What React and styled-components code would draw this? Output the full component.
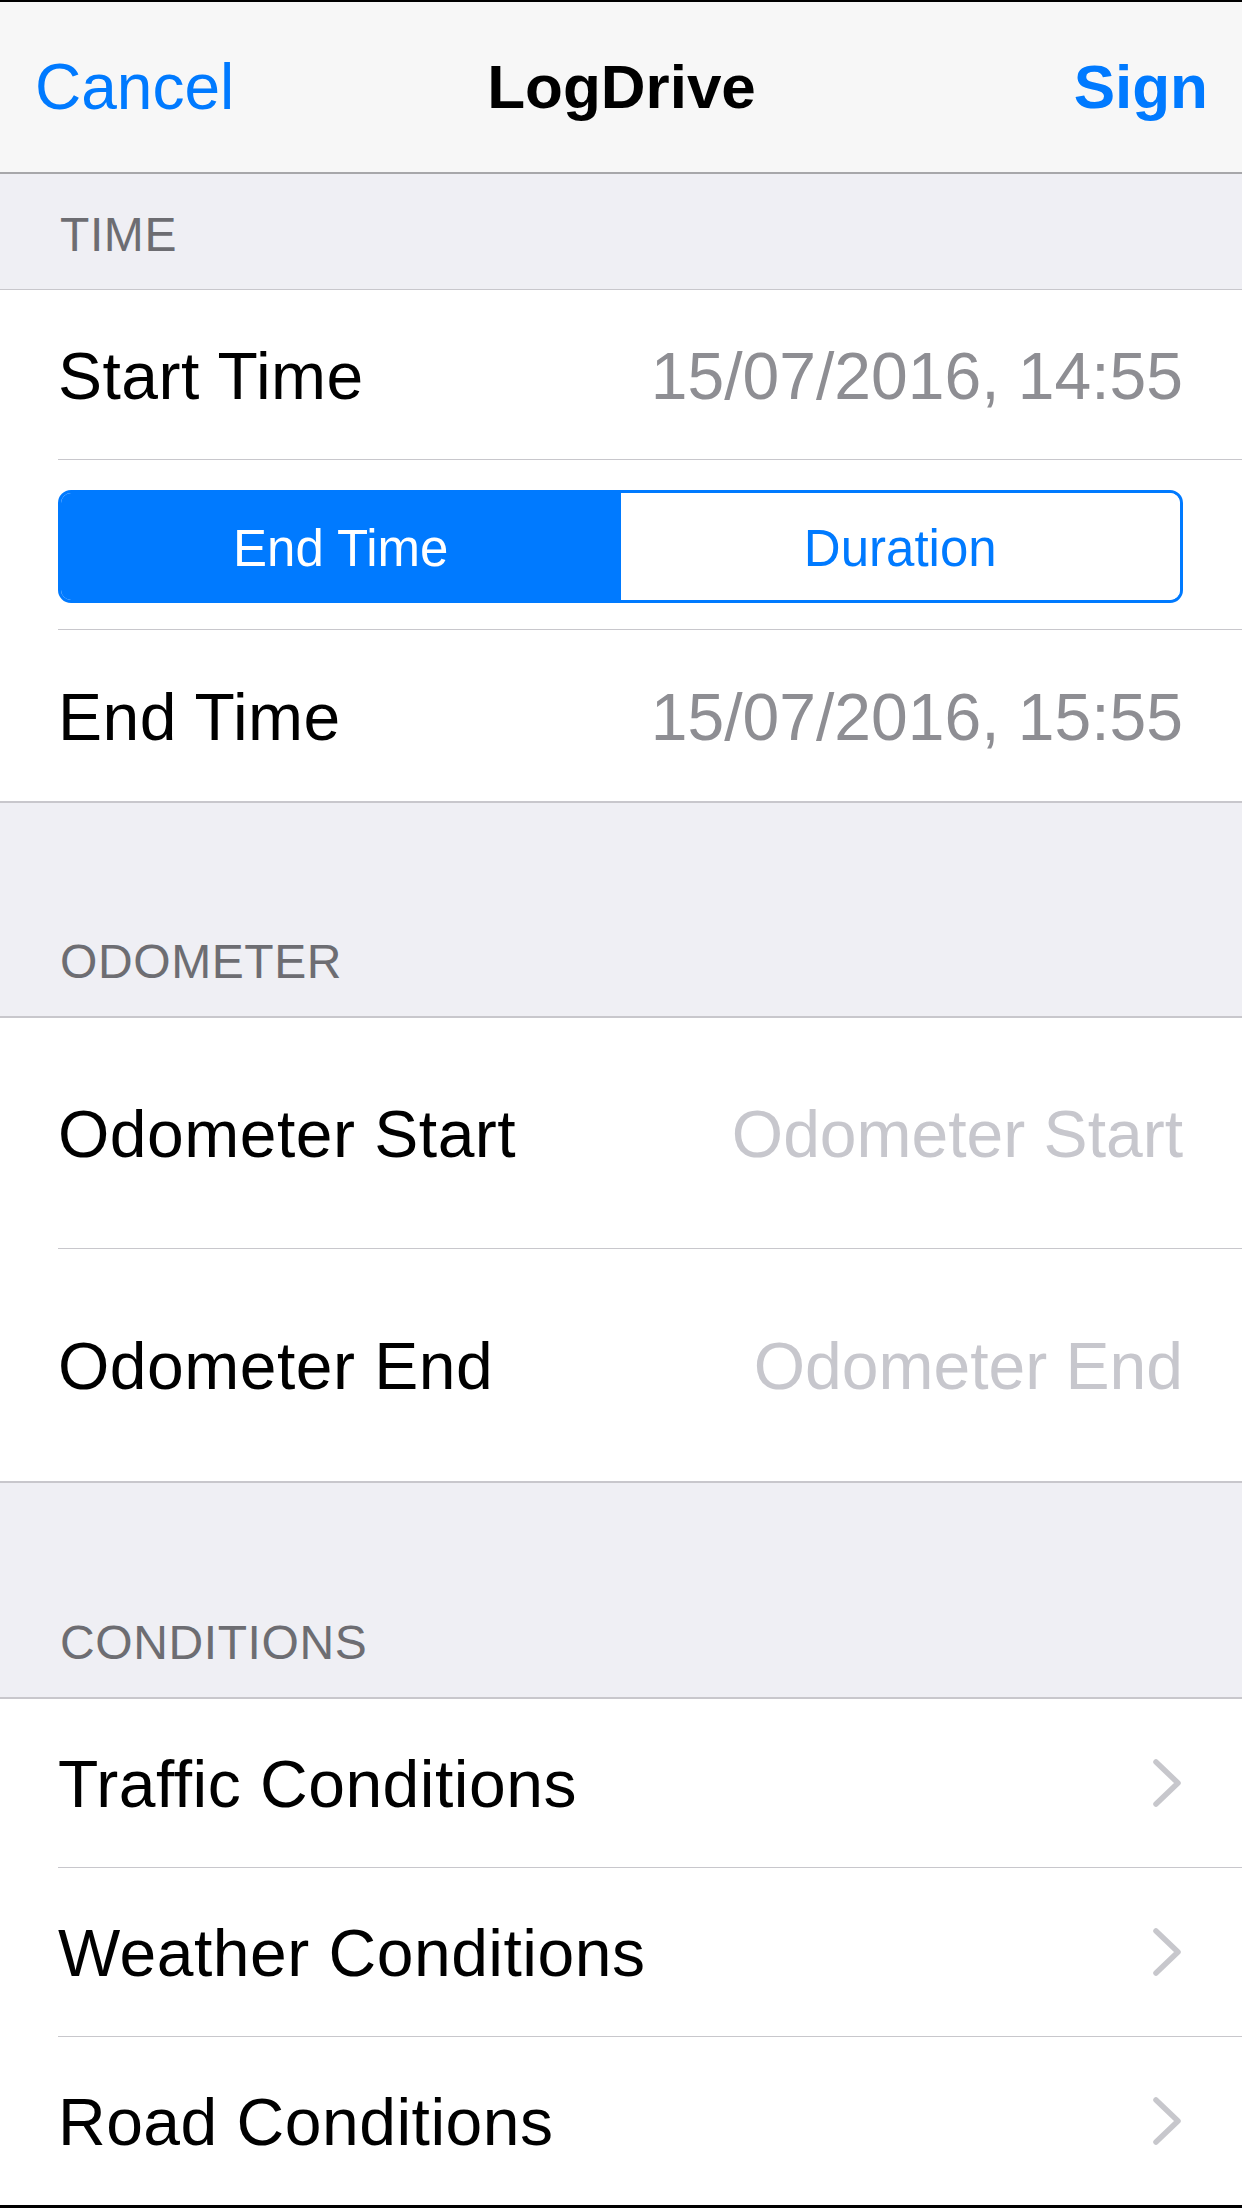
import React from 'react'
import styled, { createGlobalStyle } from 'styled-components'

const GlobalStyle = createGlobalStyle`
  html, body {
    margin: 0;
    padding: 0;
    background: #ffffff;
  }
  * {
    box-sizing: border-box;
  }
`

const Screen = styled.div`
  width: 1242px;
  height: 2208px;
  overflow: hidden;
  border-top: 2px solid #000;
  border-bottom: 3px solid #000;
  background: #efeff4;
  font-family: "Liberation Sans", Arial, sans-serif;
  display: flex;
  flex-direction: column;
`

const NavBar = styled.div`
  height: 172px;
  flex-shrink: 0;
  background: #f7f7f7;
  border-bottom: 2px solid #a7a7aa;
  display: grid;
  grid-template-columns: 1fr auto 1fr;
  align-items: center;
  padding: 0 34px 0 35px;
`

const NavButton = styled.span`
  color: #007aff;
  font-size: ${(props) => (props.$bold ? '62px' : '64px')};
  font-weight: ${(props) => (props.$bold ? 700 : 400)};
  line-height: 1;
  justify-self: ${(props) => (props.$right ? 'end' : 'start')};
`

const NavTitle = styled.span`
  color: #000;
  font-size: 62px;
  font-weight: 700;
  line-height: 1;
`

const SectionHeader = styled.div`
  height: ${(props) => props.$height}px;
  flex-shrink: 0;
  display: flex;
  align-items: flex-end;
  padding: 0 0 30px 60px;
  color: #6d6d72;
  font-size: 48px;
  letter-spacing: 0.6px;
  line-height: 1;
  border-bottom: ${(props) => props.$line}px solid #c8c7cc;
`

const Group = styled.div`
  background: #fff;
  flex-shrink: 0;
  border-bottom: ${(props) => (props.$last ? 0 : 2)}px solid #c8c7cc;
  flex-grow: ${(props) => (props.$last ? 1 : 0)};
`

const Row = styled.div`
  height: ${(props) => props.$height}px;
  padding-left: 58px;
  display: flex;
`

const RowInner = styled.div`
  flex: 1;
  display: flex;
  align-items: center;
  justify-content: space-between;
  padding-right: 59px;
  border-bottom: ${(props) => (props.$last ? 'none' : '1px solid #c8c7cc')};
`

const Label = styled.span`
  color: #000;
  font-size: 66px;
  letter-spacing: 0.5px;
  line-height: 1;
  padding-top: 2px;
`

const Value = styled.span`
  color: ${(props) => (props.$placeholder ? '#c7c7cd' : '#8e8e93')};
  font-size: 66px;
  line-height: 1;
  padding-top: 2px;
`

const Segmented = styled.div`
  width: 100%;
  height: 113px;
  margin-top: 4px;
  border: 3px solid #007aff;
  border-radius: 13px;
  overflow: hidden;
  display: grid;
  grid-template-columns: 1fr 1fr;
`

const Segment = styled.div`
  display: flex;
  align-items: center;
  justify-content: center;
  padding-top: 4px;
  background: ${(props) => (props.$active ? '#007aff' : '#fff')};
  color: ${(props) => (props.$active ? '#fff' : '#007aff')};
  font-size: 51px;
  line-height: 1;
`

const Chevron = () => (
  <svg width="32" height="50" viewBox="0 0 32 50">
    <polyline
      points="5,4 27,25 5,46"
      fill="none"
      stroke="#c7c7cc"
      strokeWidth="5.5"
      strokeLinecap="round"
      strokeLinejoin="round"
    />
  </svg>
)

export default function App() {
  return (
    <>
      <GlobalStyle />
      <Screen>
        <NavBar>
          <NavButton>Cancel</NavButton>
          <NavTitle>LogDrive</NavTitle>
          <NavButton $bold $right>Sign</NavButton>
        </NavBar>

        <SectionHeader $height={116} $line={1}>TIME</SectionHeader>
        <Group>
          <Row $height={170}>
            <RowInner>
              <Label>Start Time</Label>
              <Value>15/07/2016, 14:55</Value>
            </RowInner>
          </Row>
          <Row $height={170}>
            <RowInner>
              <Segmented>
                <Segment $active>End Time</Segment>
                <Segment>Duration</Segment>
              </Segmented>
            </RowInner>
          </Row>
          <Row $height={171}>
            <RowInner $last>
              <Label>End Time</Label>
              <Value>15/07/2016, 15:55</Value>
            </RowInner>
          </Row>
        </Group>

        <SectionHeader $height={215} $line={2}>ODOMETER</SectionHeader>
        <Group>
          <Row $height={231}>
            <RowInner>
              <Label>Odometer Start</Label>
              <Value $placeholder>Odometer Start</Value>
            </RowInner>
          </Row>
          <Row $height={232}>
            <RowInner $last>
              <Label>Odometer End</Label>
              <Value $placeholder>Odometer End</Value>
            </RowInner>
          </Row>
        </Group>

        <SectionHeader $height={216} $line={2}>CONDITIONS</SectionHeader>
        <Group $last>
          <Row $height={169}>
            <RowInner>
              <Label>Traffic Conditions</Label>
              <Chevron />
            </RowInner>
          </Row>
          <Row $height={169}>
            <RowInner>
              <Label>Weather Conditions</Label>
              <Chevron />
            </RowInner>
          </Row>
          <Row $height={167}>
            <RowInner $last>
              <Label>Road Conditions</Label>
              <Chevron />
            </RowInner>
          </Row>
        </Group>
      </Screen>
    </>
  )
}
